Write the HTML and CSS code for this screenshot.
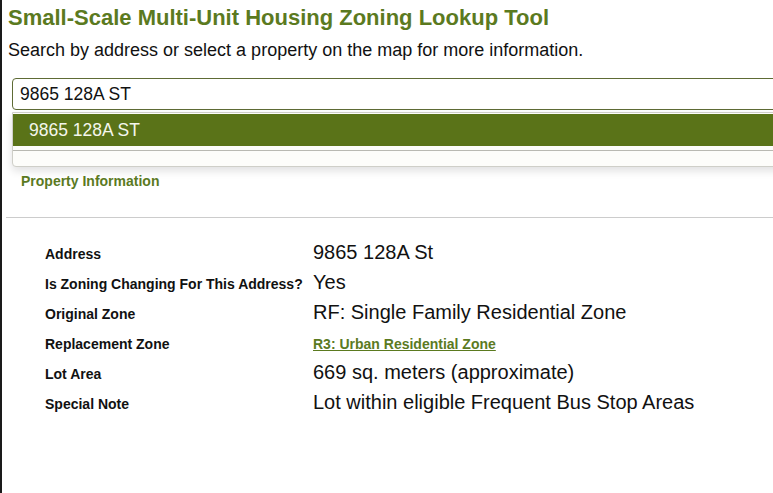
FILE: index.html
```html
<!DOCTYPE html>
<html lang="en">
<head>
<meta charset="utf-8">
<title>Small-Scale Multi-Unit Housing Zoning Lookup Tool</title>
<link rel="stylesheet" href="styles.css">
</head>
<body>
<div class="page">
  <h1 class="title">Small-Scale Multi-Unit Housing Zoning Lookup Tool</h1>
  <p class="subtitle">Search by address or select a property on the map for more information.</p>
  <div class="search">
    <div class="search-input">9865 128A ST</div>
    <div class="dropdown">
      <div class="option active">9865 128A ST</div>
      <div class="option-sep"></div>
      <div class="option-empty"></div>
    </div>
  </div>
  <div class="section-head">Property Information</div>
  <hr class="divider">
  <div class="info">
    <div class="label">Address</div>
    <div class="value">9865 128A St</div>
    <div class="label">Is Zoning Changing For This Address?</div>
    <div class="value">Yes</div>
    <div class="label">Original Zone</div>
    <div class="value">RF: Single Family Residential Zone</div>
    <div class="label">Replacement Zone</div>
    <div class="value"><a class="zone-link" href="#">R3: Urban Residential Zone</a></div>
    <div class="label">Lot Area</div>
    <div class="value">669 sq. meters (approximate)</div>
    <div class="label">Special Note</div>
    <div class="value">Lot within eligible Frequent Bus Stop Areas</div>
  </div>
</div>
</body>
</html>
```

FILE: styles.css
```css
html, body {
  margin: 0;
  padding: 0;
  background: #ffffff;
  overflow: hidden;
}

body {
  font-family: "Liberation Sans", Arial, Helvetica, sans-serif;
  color: #111;
}

.page {
  border-left: 2px solid #1a1a1a;
  min-height: 493px;
  box-sizing: border-box;
  padding-left: 6px;
  width: 773px;
  overflow: hidden;
}

.title {
  margin: 5px 0 0 0;
  font-size: 22px;
  line-height: 25px;
  font-weight: bold;
  color: #5b7a1f;
  white-space: nowrap;
}

.subtitle {
  margin: 10px 0 0 0;
  font-size: 18px;
  line-height: 21px;
  color: #111;
  white-space: nowrap;
}

.search {
  margin: 17px 0 0 4px;
  width: 820px;
}

.search-input {
  box-sizing: border-box;
  height: 32px;
  border: 1px solid #5e6b35;
  border-radius: 4px;
  padding: 0 7px;
  font-size: 17.5px;
  line-height: 30px;
  color: #111;
  background: #fff;
}

.dropdown {
  margin-top: 2px;
  border: 1px solid #cfcfc8;
  border-radius: 0 0 4px 4px;
  background: #fdfdfa;
  box-shadow: 0 4px 8px rgba(0, 0, 0, 0.12);
  padding-top: 1px;
}

.option {
  height: 32px;
  line-height: 32px;
  padding-left: 16px;
  font-size: 17.5px;
}

.option.active {
  background: #5a7318;
  color: #f4f6ec;
}

.option-sep {
  margin-top: 4px;
  height: 1px;
  background: #b9b9b2;
}

.option-empty {
  height: 15px;
}

.section-head {
  margin: 6px 0 0 13px;
  font-size: 14px;
  line-height: 16px;
  font-weight: bold;
  color: #5b7a1f;
}

.divider {
  margin: 28px 0 0 -2px;
  border: 0;
  height: 1px;
  background: #cccccc;
}

.info {
  margin: 19px 0 0 37px;
  display: grid;
  grid-template-columns: 268px auto;
  grid-auto-rows: 30px;
  align-items: baseline;
}

.label {
  font-size: 14px;
  line-height: 30px;
  font-weight: bold;
  color: #111;
  white-space: nowrap;
}

.value {
  font-size: 20px;
  line-height: 30px;
  color: #111;
  white-space: nowrap;
}

.zone-link {
  font-size: 14px;
  font-weight: bold;
  color: #5b7a1f;
  text-decoration: underline;
}
```
